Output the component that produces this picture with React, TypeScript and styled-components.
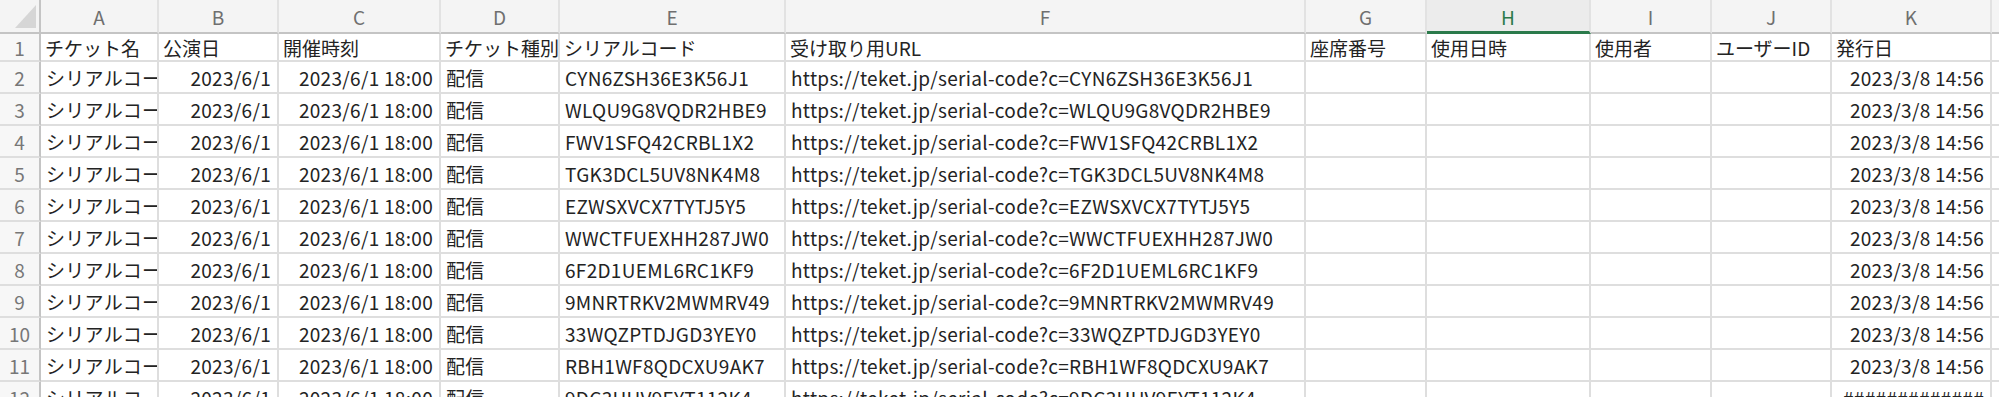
import React from 'react';
import styled, { createGlobalStyle } from 'styled-components';

const GlobalStyle = createGlobalStyle`
  html, body { margin: 0; padding: 0; background: #fff; overflow: hidden; }
  body { font-family: "Noto Sans CJK JP", "Noto Sans", sans-serif; }
  * { box-sizing: border-box; }
`;

const COL_WIDTHS = [118, 120, 162, 119, 226, 520, 121, 164, 121, 120, 160];
const LETTERS = ['A', 'B', 'C', 'D', 'E', 'F', 'G', 'H', 'I', 'J', 'K'];
const ACTIVE = 'H';

const Sheet = styled.div`
  display: grid;
  grid-template-columns: 41px ${COL_WIDTHS.map((w) => `${w}px`).join(' ')} 1fr;
  grid-template-rows: 34px 28px;
  grid-auto-rows: 32px;
  width: 100vw;
  height: 397px;
  overflow: hidden;
  font-size: 19px;
  color: #232323;
`;

const Corner = styled.div`
  position: relative;
  background: #f4f4f4;
  border-right: 2px solid #c4c4c4;
  border-bottom: 2px solid #c4c4c4;
`;

const CornerMark = styled.svg`
  position: absolute;
  left: 0;
  top: 0;
`;

const ColHead = styled.div<{ $active?: boolean }>`
  display: flex;
  align-items: center;
  justify-content: center;
  background: ${(p) => (p.$active ? '#ececec' : '#f4f4f4')};
  color: ${(p) => (p.$active ? '#2b7a4b' : '#6f6f6f')};
  border-right: 2px solid #e2e2e2;
  border-bottom: ${(p) => (p.$active ? '3px solid #2b7a4b' : '2px solid #c4c4c4')};
  font-size: 19px;
  padding-top: 1px;
`;

const RowHead = styled.div`
  display: flex;
  align-items: center;
  justify-content: center;
  background: #f7f7f7;
  color: #777;
  border-right: 2px solid #c4c4c4;
  border-bottom: 2px solid #dedede;
`;

const Cell = styled.div<{ $right?: boolean; $title?: boolean }>`
  display: flex;
  align-items: center;
  justify-content: ${(p) => (p.$right ? 'flex-end' : 'flex-start')};
  padding: ${(p) => (p.$title ? '0 0 0 4px' : '0 6px 0 5px')};
  white-space: nowrap;
  overflow: hidden;
  letter-spacing: ${(p) => (p.$title ? '0' : '0.3px')};
  background: #fff;
  border-right: 2px solid #dedede;
  border-bottom: 2px solid #dedede;
`;

const HEADERS = ['チケット名', '公演日', '開催時刻', 'チケット種別', 'シリアルコード', '受け取り用URL', '座席番号', '使用日時', '使用者', 'ユーザーID', '発行日'];

const CODES = [
  'CYN6ZSH36E3K56J1',
  'WLQU9G8VQDR2HBE9',
  'FWV1SFQ42CRBL1X2',
  'TGK3DCL5UV8NK4M8',
  'EZWSXVCX7TYTJ5Y5',
  'WWCTFUEXHH287JW0',
  '6F2D1UEML6RC1KF9',
  '9MNRTRKV2MWMRV49',
  '33WQZPTDJGD3YEY0',
  'RBH1WF8QDCXU9AK7',
  '9DC3HUV9EYT112K4',
];

type Row = { cells: string[]; right: boolean[]; title?: boolean };

const rows: Row[] = [
  { cells: [...HEADERS, ''], right: HEADERS.map(() => false).concat([false]), title: true },
  ...CODES.map((code, i) => ({
    cells: [
      'シリアルコード',
      '2023/6/1',
      '2023/6/1 18:00',
      '配信',
      code,
      `https://teket.jp/serial-code?c=${code}`,
      '',
      '',
      '',
      '',
      i === CODES.length - 1 ? '#############' : '2023/3/8 14:56',
      '',
    ],
    right: [false, true, true, false, false, false, false, false, false, false, true, false],
  })),
];

export default function App() {
  return (
    <>
      <GlobalStyle />
      <Sheet>
        <Corner>
          <CornerMark width="40" height="32" viewBox="0 0 40 32">
            <polygon points="15,28 36,5 36,28" fill="#d6d6d6" />
          </CornerMark>
        </Corner>
        {LETTERS.map((l) => (
          <ColHead key={l} $active={l === ACTIVE}>{l}</ColHead>
        ))}
        <ColHead />
        {rows.map((row, r) => (
          <React.Fragment key={r}>
            <RowHead>{r + 1}</RowHead>
            {row.cells.map((c, ci) => (
              <Cell key={ci} $right={row.right[ci]} $title={row.title}>{c}</Cell>
            ))}
          </React.Fragment>
        ))}
      </Sheet>
    </>
  );
}
